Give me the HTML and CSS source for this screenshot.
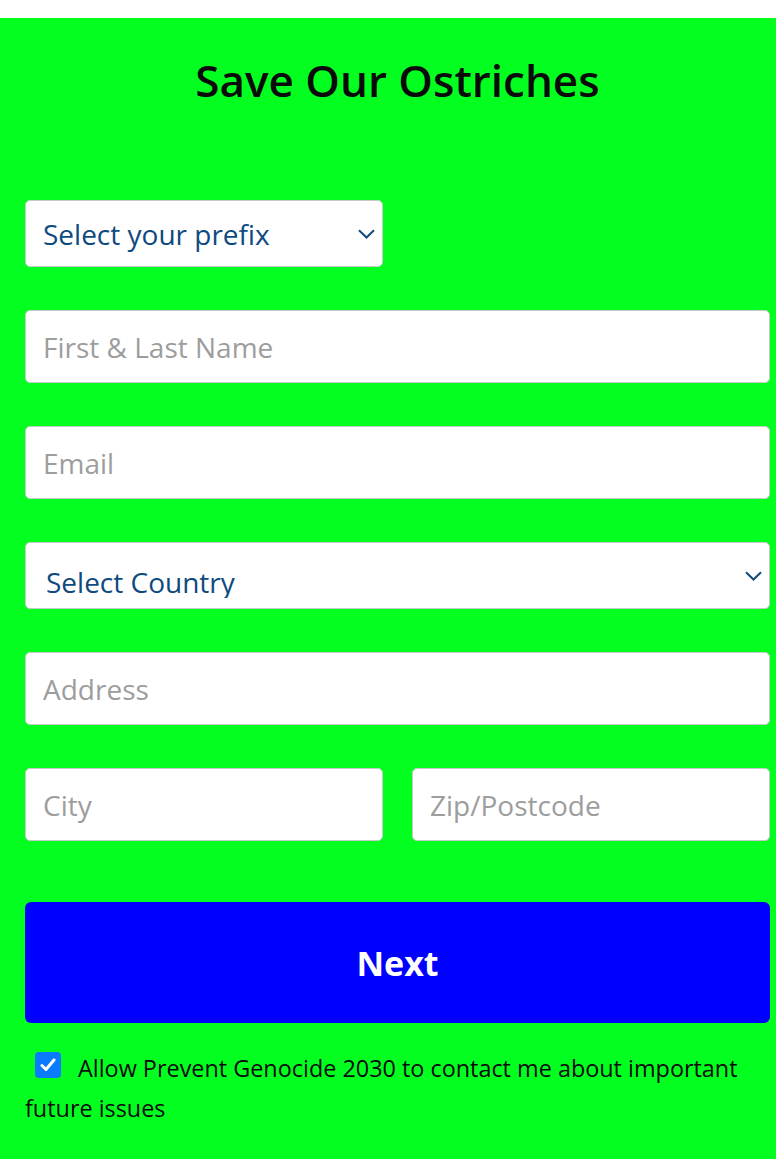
FILE: index.html
```html
<!DOCTYPE html>
<html lang="en">
<head>
<meta charset="utf-8">
<title>Save Our Ostriches</title>
<link rel="stylesheet" href="styles.css">
</head>
<body>
<div class="topbar"></div>
<main class="page">
  <h1 class="title">Save Our Ostriches</h1>
  <form class="form">
    <div class="select select-half">
      <span class="select-text">Select your prefix</span>
      <svg class="chev" width="17" height="10" viewBox="0 0 17 10"><path d="M1 1.2 L8.5 8.5 L16 1.2" fill="none" stroke="#124b7c" stroke-width="2"/></svg>
    </div>
    <input class="field" type="text" placeholder="First &amp; Last Name">
    <input class="field" type="text" placeholder="Email">
    <div class="select select-country">
      <span class="select-text country-text">Select Country</span>
      <svg class="chev" width="17" height="10" viewBox="0 0 17 10"><path d="M1 1.2 L8.5 8.5 L16 1.2" fill="none" stroke="#124b7c" stroke-width="2"/></svg>
    </div>
    <input class="field" type="text" placeholder="Address">
    <div class="pair">
      <input class="field" type="text" placeholder="City">
      <input class="field" type="text" placeholder="Zip/Postcode">
    </div>
    <button class="next" type="button">Next</button>
    <p class="consent"><span class="check"><svg width="16" height="14" viewBox="0 0 16 14"><path d="M2 7.5 L6 11.5 L14 2" fill="none" stroke="#fff" stroke-width="3" stroke-linecap="round" stroke-linejoin="round"/></svg></span>Allow Prevent Genocide 2030 to contact me about important future issues</p>
  </form>
</main>
</body>
</html>
```
FILE: styles.css
```css
html, body {
  margin: 0;
  padding: 0;
  background: #ffffff;
}

body {
  font-family: "Open Sans", "Noto Sans", sans-serif;
}

.topbar {
  height: 18px;
  background: #ffffff;
}

.page {
  background: #03ff1f;
  padding: 33px 6px 30px 25px;
  min-height: 1141px;
  box-sizing: border-box;
}

.title {
  margin: 0;
  text-align: center;
  font-size: 44px;
  line-height: 58px;
  font-weight: 600;
  color: #0a0a0a;
}

.form {
  display: flex;
  flex-direction: column;
  gap: 43px;
  margin-top: 91px;
}

.select {
  box-sizing: border-box;
  height: 67px;
  background: #fff;
  border: 1px solid #c9c9c9;
  border-radius: 5px;
  display: flex;
  align-items: center;
  justify-content: space-between;
  padding: 0 7px 0 17px;
  overflow: hidden;
}

.select-half {
  width: 358px;
}

.select-text {
  font-size: 28px;
  color: #0f4a7f;
  white-space: nowrap;
}

.select-country {
  padding-left: 20px;
}

.country-text {
  align-self: flex-start;
  display: block;
  margin-top: 19px;
  line-height: 40px;
  height: 36px;
  overflow: hidden;
}

.chev {
  display: block;
  flex: none;
}

.field {
  box-sizing: border-box;
  width: 100%;
  height: 73px;
  margin: 0;
  padding: 0 17px;
  background: #fff;
  border: 1px solid #c9c9c9;
  border-radius: 5px;
  font-family: "Open Sans", "Noto Sans", sans-serif;
  font-size: 28px;
  color: #333;
  outline: none;
}

.field::placeholder {
  color: #9d9d9d;
}

.pair {
  display: grid;
  grid-template-columns: 1fr 1fr;
  gap: 29px;
}

.next {
  margin-top: 18px;
  height: 121px;
  width: 100%;
  border: none;
  border-radius: 6px;
  background: #0000ff;
  color: #ffffff;
  font-family: "Open Sans", "Noto Sans", sans-serif;
  font-size: 34px;
  font-weight: 700;
  cursor: pointer;
}

.consent {
  margin: -18px 0 0 0;
  font-size: 23.4px;
  line-height: 40px;
  color: #0a0a0a;
}

.check {
  display: inline-block;
  box-sizing: border-box;
  width: 26px;
  height: 26px;
  padding: 6px 5px;
  margin: 0 17px 0 10px;
  background: #0a7aff;
  border-radius: 4px;
  vertical-align: -1px;
}

.check svg {
  display: block;
}
```
